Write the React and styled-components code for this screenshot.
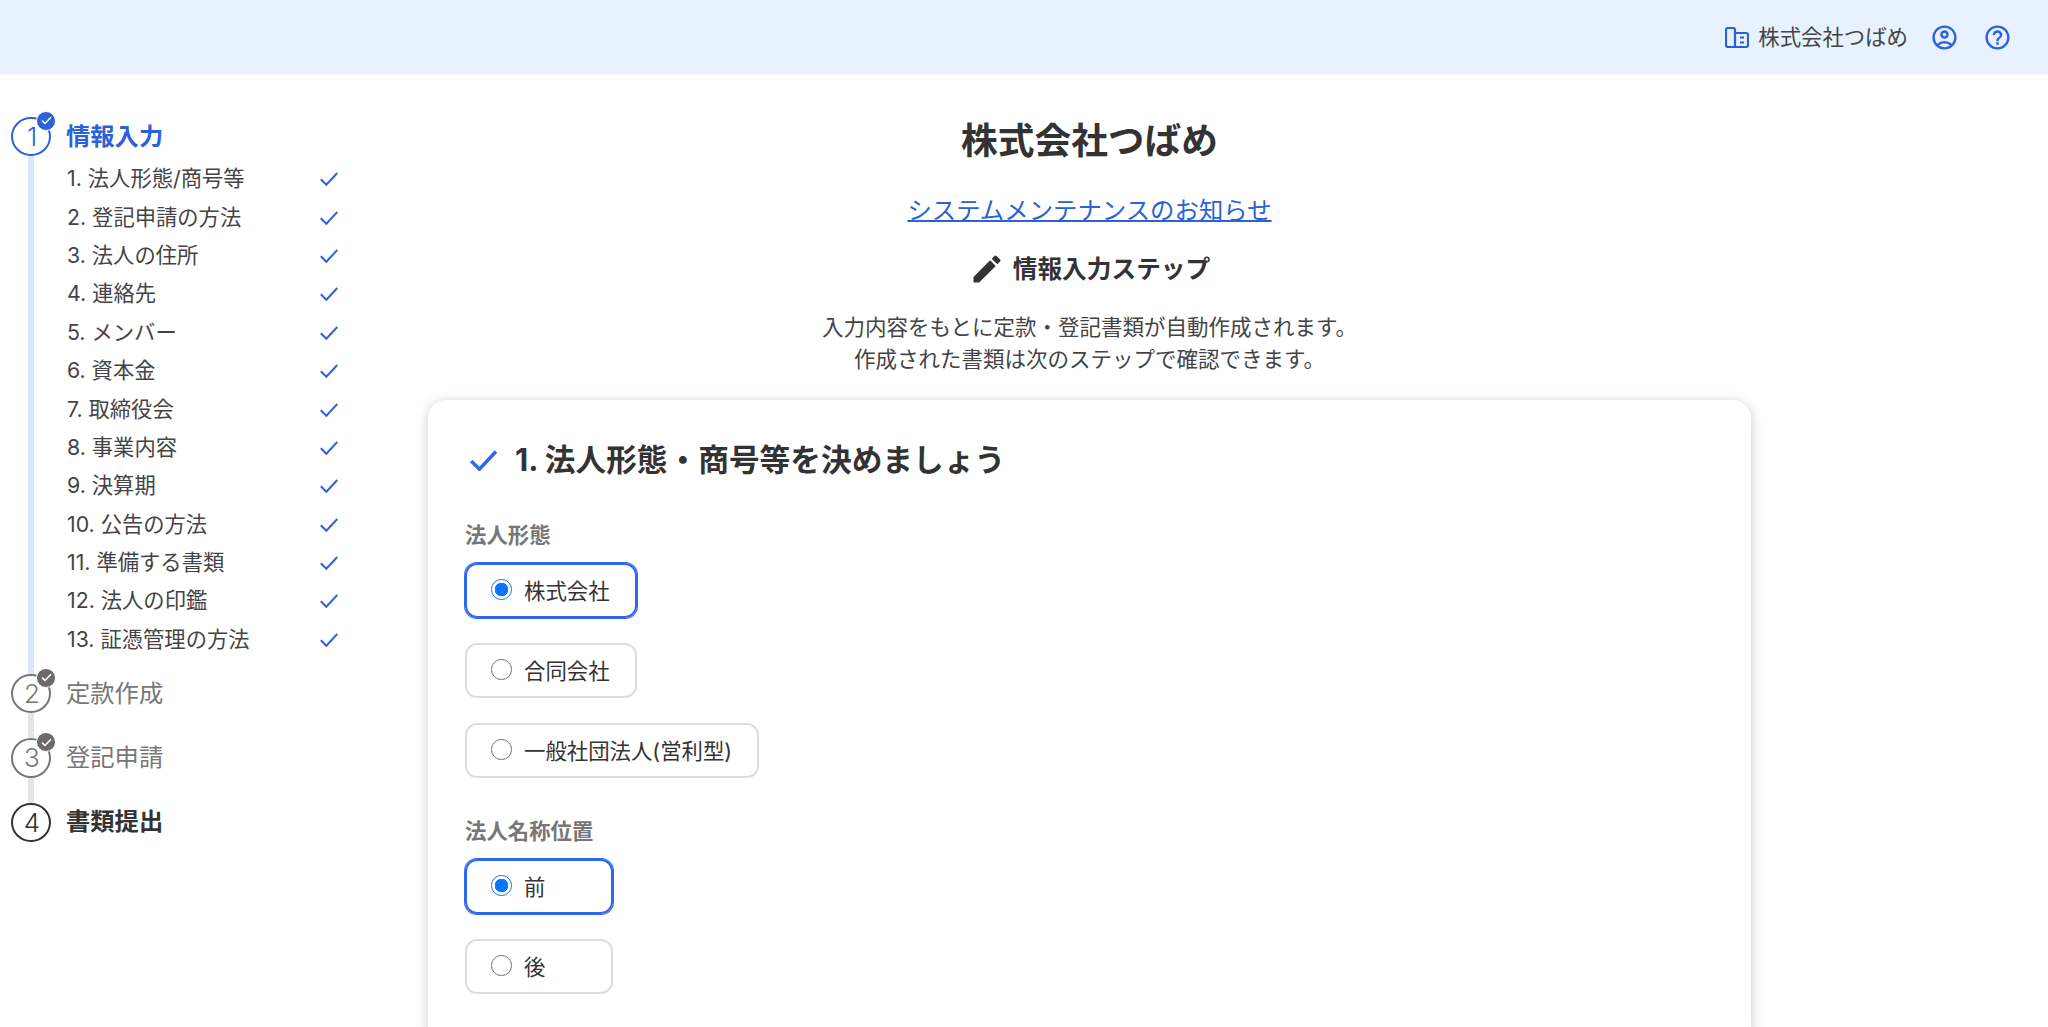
import React from "react";
import styled, { createGlobalStyle } from "styled-components";
import { MdOutlineAccountCircle, MdHelpOutline, MdEdit } from "react-icons/md";

const blue = "#2b62d9";
const fontStack = `Inter, "Noto Sans CJK JP", "Noto Sans", sans-serif`;

const GlobalStyle = createGlobalStyle`
  html, body { margin: 0; padding: 0; height: 100%; overflow: hidden; background: #fff; }
  body { font-family: ${fontStack}; color: #333; }
  #root { height: 100%; }
`;

const Page = styled.div`
  height: 100vh;
  overflow: hidden;
  display: flex;
  flex-direction: column;
`;

const TopBar = styled.header`
  height: 74px;
  flex: none;
  background: #e8f1ff;
  display: flex;
  align-items: center;
  justify-content: flex-end;
  padding: 0 36px 0 0;
`;

const Company = styled.div`
  display: flex;
  align-items: center;
  gap: 9.5px;
  font-size: 21.4px;
  line-height: 28px;
  color: #444;
  margin-right: 22px;
`;

const TopIcon = styled.span`
  display: flex;
  color: ${blue};
  width: 29px;
  height: 29px;
  margin-left: ${(p) => p.$gap || 0}px;
  svg { width: 29px; height: 29px; }
`;

const Content = styled.div`
  flex: 1;
  display: flex;
  min-height: 0;
`;

const Sidebar = styled.nav`
  width: 428px;
  flex: none;
  box-sizing: border-box;
  padding: 43px 0 0 11px;
`;

const StepRow = styled.div`
  display: flex;
  align-items: center;
  gap: 15px;
  height: 39px;
`;

const StepCircle = styled.div`
  position: relative;
  width: 40px;
  height: 39.5px;
  box-sizing: border-box;
  border-radius: 50%;
  border: 2px solid ${(p) => p.$color};
  background: #fff;
  color: ${(p) => p.$color};
  font-size: 26px;
  font-weight: 350;
  display: flex;
  align-items: center;
  justify-content: center;
  padding-left: 2px;
  flex: none;
`;

const Badge = styled.span`
  position: absolute;
  top: -8px;
  right: -7px;
  width: 20px;
  height: 20px;
  border-radius: 50%;
  background: ${(p) => p.$color};
  border: 1px solid #fff;
  box-sizing: border-box;
  display: flex;
  align-items: center;
  justify-content: center;
`;

const StepLabel = styled.div`
  font-size: 24.3px;
  line-height: 32px;
  margin-bottom: 2px;
  font-weight: ${(p) => (p.$bold ? 700 : 400)};
  color: ${(p) => p.$color};
`;

const SubList = styled.ul`
  list-style: none;
  margin: 0 0 0 17px;
  padding: 4px 0 15px 33px;
  border-left: 6px solid #dbe6fd;
  width: 271px;
`;

const SubItem = styled.li`
  height: 38.4px;
  display: flex;
  align-items: center;
  justify-content: space-between;
  font-size: 21.3px;
  color: #444;
  white-space: nowrap;
`;

const SubText = styled.span`
  margin-bottom: 5px;
`;

const Connector = styled.div`
  margin-left: 17px;
  width: 6px;
  height: 25.4px;
  background: #e5e5e5;
`;

const Main = styled.main`
  width: 1323px;
  flex: none;
  display: flex;
  flex-direction: column;
  align-items: center;
  padding-top: 45px;
`;

const Title = styled.h1`
  margin: 0 0 31px;
  font-size: 36.7px;
  line-height: 44px;
  font-weight: 700;
  color: #333;
`;

const NoticeLink = styled.a`
  font-size: 24.4px;
  line-height: 32px;
  color: ${blue};
  text-decoration: underline;
  text-decoration-thickness: 1.5px;
  margin-bottom: 24.5px;
`;

const StepHead = styled.h2`
  margin: 0 0 24.5px;
  display: flex;
  align-items: center;
  gap: 8px;
  font-size: 24.7px;
  line-height: 36px;
  font-weight: 700;
  color: #333;
  svg { width: 36px; height: 36px; }
`;

const Lead = styled.p`
  margin: 0 0 25px;
  font-size: 21.5px;
  line-height: 32px;
  text-align: center;
  color: #444;
`;

const Card = styled.section`
  width: 100%;
  flex: 1;
  box-sizing: border-box;
  background: #fff;
  border-radius: 18px 18px 0 0;
  box-shadow: 0 2px 12px rgba(0, 0, 0, 0.22);
  padding: 44px 37px 0;
`;

const CardHead = styled.h3`
  margin: 0 0 45px 5px;
  display: flex;
  align-items: center;
  gap: 18px;
  font-size: 30.7px;
  line-height: 32px;
  font-weight: 700;
  color: #333;
`;

const FieldLabel = styled.div`
  font-size: 21.4px;
  line-height: 28px;
  font-weight: 700;
  color: #777;
  margin-bottom: 14px;
`;

const Options = styled.div`
  display: flex;
  flex-direction: column;
  align-items: flex-start;
  gap: 25px;
  margin-bottom: 39px;
`;

const Option = styled.label`
  display: inline-flex;
  align-items: center;
  gap: 12.5px;
  box-sizing: border-box;
  height: 55px;
  min-width: ${(p) => p.$minWidth || 0}px;
  padding: 0 25px 2px 24px;
  border: 2px solid ${(p) => (p.$selected ? "#2f68ee" : "#dedede")};
  box-shadow: ${(p) => (p.$selected ? "0 0 0 1px #2f68ee" : "none")};
  border-radius: 12px;
  font-size: 21.4px;
  color: #333;
`;

const Radio = styled.input`
  appearance: none;
  margin: 0;
  width: 20.5px;
  height: 20.5px;
  box-sizing: border-box;
  border-radius: 50%;
  border: 1.8px solid ${(p) => (p.checked ? "#0b76ff" : "#767676")};
  background: ${(p) =>
    p.checked ? "radial-gradient(circle, #0b76ff 0 6.5px, #fff 7px)" : "#fff"};
  flex: none;
`;

const Check = ({ w = 18, h = 14, sw = 2, color = "#2f63d6" }) => (
  <svg width={w} height={h} viewBox="0 0 18 14" fill="none">
    <path
      d="M0.8 7.3 L6.3 12.8 L17.3 1"
      stroke={color}
      strokeWidth={(sw * 18) / w}
    />
  </svg>
);

const MiniCheck = () => (
  <svg width="11" height="9" viewBox="0 0 11 9" fill="none">
    <path d="M1 4.6 L4 7.4 L10 1.2" stroke="#fff" strokeWidth="1.5" />
  </svg>
);

const BuildingIcon = () => (
  <svg width="24" height="21" viewBox="0 0 24 21" fill="none" stroke={blue} strokeWidth="2.2">
    <path d="M10 20H3a2 2 0 0 1-2-2V3a2 2 0 0 1 2-2h5a2 2 0 0 1 2 2v17h11a2 2 0 0 0 2-2V8a2 2 0 0 0-2-2H10" />
    <path d="M15 10.5h4M15 15.5h4" />
  </svg>
);

const subSteps = [
  "1. 法人形態/商号等",
  "2. 登記申請の方法",
  "3. 法人の住所",
  "4. 連絡先",
  "5. メンバー",
  "6. 資本金",
  "7. 取締役会",
  "8. 事業内容",
  "9. 決算期",
  "10. 公告の方法",
  "11. 準備する書類",
  "12. 法人の印鑑",
  "13. 証憑管理の方法",
];

const Step = ({ n, label, color, labelColor, bold, done }) => (
  <StepRow>
    <StepCircle $color={color}>
      {n}
      {done && (
        <Badge $color={done}>
          <MiniCheck />
        </Badge>
      )}
    </StepCircle>
    <StepLabel $color={labelColor} $bold={bold}>
      {label}
    </StepLabel>
  </StepRow>
);

const Choice = ({ label, selected, minWidth, name }) => (
  <Option $selected={selected} $minWidth={minWidth}>
    <Radio type="radio" name={name} checked={!!selected} readOnly />
    {label}
  </Option>
);

export default function App() {
  return (
    <Page>
      <GlobalStyle />
      <TopBar>
        <Company>
          <BuildingIcon />
          株式会社つばめ
        </Company>
        <TopIcon>
          <MdOutlineAccountCircle />
        </TopIcon>
        <TopIcon $gap={24}>
          <MdHelpOutline />
        </TopIcon>
      </TopBar>
      <Content>
        <Sidebar>
          <Step n={1} label="情報入力" color={blue} labelColor={blue} bold done={blue} />
          <SubList>
            {subSteps.map((s) => (
              <SubItem key={s}>
                <SubText>{s}</SubText>
                <Check />
              </SubItem>
            ))}
          </SubList>
          <Step n={2} label="定款作成" color="#777" labelColor="#777" done="#6e6a6a" />
          <Connector />
          <Step n={3} label="登記申請" color="#777" labelColor="#777" done="#6e6a6a" />
          <Connector />
          <Step n={4} label="書類提出" color="#333" labelColor="#333" bold />
        </Sidebar>
        <Main>
          <Title>株式会社つばめ</Title>
          <NoticeLink href="#">システムメンテナンスのお知らせ</NoticeLink>
          <StepHead>
            <MdEdit />
            情報入力ステップ
          </StepHead>
          <Lead>
            入力内容をもとに定款・登記書類が自動作成されます。
            <br />
            作成された書類は次のステップで確認できます。
          </Lead>
          <Card>
            <CardHead>
              <Check w={27} h={21} sw={3.5} color="#2f68ee" />
              1. 法人形態・商号等を決めましょう
            </CardHead>
            <FieldLabel>法人形態</FieldLabel>
            <Options>
              <Choice name="type" label="株式会社" selected />
              <Choice name="type" label="合同会社" />
              <Choice name="type" label="一般社団法人(営利型)" />
            </Options>
            <FieldLabel>法人名称位置</FieldLabel>
            <Options>
              <Choice name="pos" label="前" selected minWidth={148} />
              <Choice name="pos" label="後" minWidth={148} />
            </Options>
          </Card>
        </Main>
      </Content>
    </Page>
  );
}
